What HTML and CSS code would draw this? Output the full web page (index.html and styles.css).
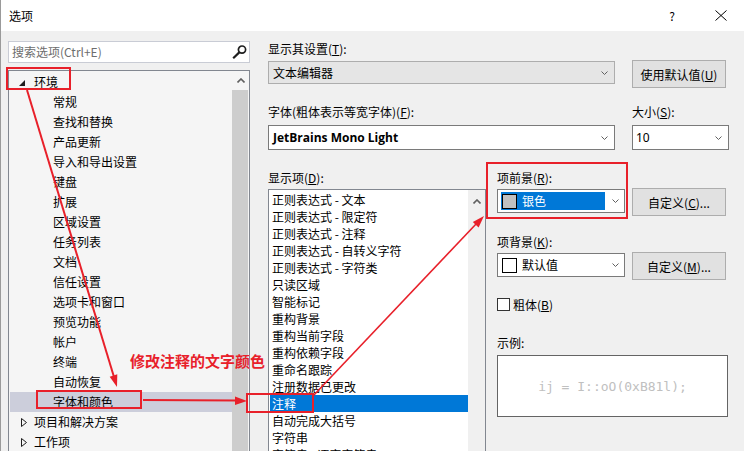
FILE: index.html
```html
<!DOCTYPE html>
<html lang="zh-CN">
<head>
<meta charset="utf-8">
<title>选项</title>
<link rel="stylesheet" href="styles.css">
</head>
<body>
<div class="window">
  <div class="titlebar">
    <span class="title">选项</span>
    <span class="help">?</span>
    <svg class="close" width="12" height="11" viewBox="0 0 12 11"><path d="M0.5 0.5 L11.5 10.5 M11.5 0.5 L0.5 10.5" stroke="#000" stroke-width="1" fill="none"/></svg>
  </div>
  <div class="main">
    <div class="left">
      <div class="search">
        <span class="placeholder">搜索选项(Ctrl+E)</span>
        <svg class="mag" width="15" height="14" viewBox="0 0 15 14"><circle cx="10" cy="4.6" r="3.6" stroke="#1e1e1e" stroke-width="1.7" fill="none"/><path d="M7.3 7.4 L1.2 13.2" stroke="#1e1e1e" stroke-width="2.2"/></svg>
      </div>
      <div class="tree">
        <div class="tree-items">
          <div class="node"><svg class="tri" width="6" height="6" viewBox="0 0 6 6"><polygon points="6,0 6,6 0,6" fill="#1e1e1e"/></svg>环境</div>
          <div class="leaf">常规</div>
          <div class="leaf">查找和替换</div>
          <div class="leaf">产品更新</div>
          <div class="leaf">导入和导出设置</div>
          <div class="leaf">键盘</div>
          <div class="leaf">扩展</div>
          <div class="leaf">区域设置</div>
          <div class="leaf">任务列表</div>
          <div class="leaf">文档</div>
          <div class="leaf">信任设置</div>
          <div class="leaf">选项卡和窗口</div>
          <div class="leaf">预览功能</div>
          <div class="leaf">帐户</div>
          <div class="leaf">终端</div>
          <div class="leaf">自动恢复</div>
          <div class="leaf selected">字体和颜色</div>
          <div class="node"><svg class="tri-c" width="6" height="9" viewBox="0 0 6 9"><polygon points="0.5,0.5 5.5,4.5 0.5,8.5" fill="none" stroke="#1e1e1e" stroke-width="1"/></svg>项目和解决方案</div>
          <div class="node"><svg class="tri-c" width="6" height="9" viewBox="0 0 6 9"><polygon points="0.5,0.5 5.5,4.5 0.5,8.5" fill="none" stroke="#1e1e1e" stroke-width="1"/></svg>工作项</div>
        </div>
        <div class="vscroll">
          <div class="sarrow"><svg width="8" height="5" viewBox="0 0 8 5"><path d="M0.5 4.5 L4 1 L7.5 4.5" stroke="#606060" stroke-width="1.6" fill="none"/></svg></div>
          <div class="thumb"></div>
        </div>
      </div>
    </div>

    <div class="right">
      <div class="lbl">显示其设置(<u>T</u>):</div>
      <div class="row row-top">
        <div class="combo combo-gray">文本编辑器<svg class="chev" width="7" height="4" viewBox="0 0 7 4"><path d="M0.5 0.5 L3.5 3.5 L6.5 0.5" stroke="#606060" stroke-width="1" fill="none"/></svg></div>
        <div class="btn">使用默认值(<u>U</u>)</div>
      </div>

      <div class="row row-font">
        <div class="col-font">
          <div class="lbl">字体(粗体表示等宽字体)(<u>F</u>):</div>
          <div class="combo combo-white combo-font"><b class="fontname">JetBrains Mono Light</b><svg class="chev" width="7" height="4" viewBox="0 0 7 4"><path d="M0.5 0.5 L3.5 3.5 L6.5 0.5" stroke="#606060" stroke-width="1" fill="none"/></svg></div>
        </div>
        <div class="col-size">
          <div class="lbl">大小(<u>S</u>):</div>
          <div class="combo combo-white combo-size">10<svg class="chev" width="7" height="4" viewBox="0 0 7 4"><path d="M0.5 0.5 L3.5 3.5 L6.5 0.5" stroke="#606060" stroke-width="1" fill="none"/></svg></div>
        </div>
      </div>

      <div class="row row-bottom">
        <div class="col-list">
          <div class="lbl">显示项(<u>D</u>):</div>
          <div class="listbox">
            <div class="list-items">
              <div class="li">正则表达式 - 文本</div>
              <div class="li">正则表达式 - 限定符</div>
              <div class="li">正则表达式 - 注释</div>
              <div class="li">正则表达式 - 自转义字符</div>
              <div class="li">正则表达式 - 字符类</div>
              <div class="li">只读区域</div>
              <div class="li">智能标记</div>
              <div class="li">重构背景</div>
              <div class="li">重构当前字段</div>
              <div class="li">重构依赖字段</div>
              <div class="li">重命名跟踪</div>
              <div class="li">注册数据已更改</div>
              <div class="li selected">注释</div>
              <div class="li">自动完成大括号</div>
              <div class="li">字符串</div>
              <div class="li">字符串 - 逐字字符串</div>
            </div>
            <div class="lscroll">
              <div class="sarrow"><svg width="8" height="5" viewBox="0 0 8 5"><path d="M0.5 4.5 L4 1 L7.5 4.5" stroke="#606060" stroke-width="1.6" fill="none"/></svg></div>
            </div>
          </div>
        </div>

        <div class="col-props">
          <div class="lbl">项前景(<u>R</u>):</div>
          <div class="row row-color">
            <div class="combo combo-white combo-color">
              <span class="hl"><span class="swatch swatch-silver"></span>银色</span>
              <svg class="chev" width="7" height="4" viewBox="0 0 7 4"><path d="M0.5 0.5 L3.5 3.5 L6.5 0.5" stroke="#606060" stroke-width="1" fill="none"/></svg>
            </div>
            <div class="btn btn-custom">自定义(<u>C</u>)...</div>
          </div>
          <div class="lbl lbl-bg">项背景(<u>K</u>):</div>
          <div class="row row-color">
            <div class="combo combo-white combo-color">
              <span class="plain"><span class="swatch swatch-white"></span>默认值</span>
              <svg class="chev" width="7" height="4" viewBox="0 0 7 4"><path d="M0.5 0.5 L3.5 3.5 L6.5 0.5" stroke="#606060" stroke-width="1" fill="none"/></svg>
            </div>
            <div class="btn btn-custom">自定义(<u>M</u>)...</div>
          </div>
          <div class="check-row"><span class="checkbox"></span>粗体(<u>B</u>)</div>
          <div class="lbl lbl-sample">示例:</div>
          <div class="sample">ij = I::oO(0xB81l);</div>
        </div>
      </div>
    </div>
  </div>

  <svg class="overlay" width="744" height="451" viewBox="0 0 744 451">
    <g fill="none" stroke="#e8202a" stroke-width="2">
      <rect x="7" y="68" width="63" height="21"/>
      <rect x="37" y="391" width="104" height="17"/>
      <rect x="247" y="394" width="66" height="18"/>
      <rect x="487" y="163" width="140" height="55"/>
    </g>
    <g stroke="#e8202a">
      <line x1="27" y1="90" x2="114" y2="377" stroke-width="2"/>
      <line x1="143" y1="400" x2="237" y2="400.6" stroke-width="2"/>
      <line x1="313" y1="396" x2="477" y2="223" stroke-width="1.6"/>
    </g>
    <g fill="#e8202a">
      <polygon points="117,387 109.7,376.7 117.3,374.3"/>
      <polygon points="247,401 235,396.5 235,405"/>
      <polygon points="484,216 478.6,227.5 472.8,221.9"/>
    </g>
  </svg>
  <div class="note">修改注释的文字颜色</div>
</div>
</body>
</html>
```

FILE: styles.css
```css
* { box-sizing: border-box; }

html, body {
  margin: 0;
  padding: 0;
}

body {
  width: 744px;
  height: 451px;
  overflow: hidden;
  font-family: "Noto Sans CJK SC", "Microsoft YaHei", sans-serif;
  font-size: 12px;
  color: #000;
  background: #f0f0f0;
}

u { text-decoration: underline; text-underline-offset: 1px; }

.window {
  position: relative;
  width: 744px;
  height: 451px;
  overflow: hidden;
  background: #f0f0f0;
  border-left: 1px solid #9a9a9a;
}

/* title bar */
.titlebar {
  height: 31px;
  background: #fff;
  display: flex;
  align-items: center;
  padding-left: 8px;
}
.title { flex: 1; font-size: 12px; line-height: 16px; }
.help { font-size: 12px; line-height: 16px; margin-right: 40px; }
.close { margin-right: 17px; }

/* main layout */
.main {
  display: flex;
  padding: 10px 0 0 7px;
}

.left {
  width: 242px;
  flex: none;
}

.search {
  height: 22px;
  background: #fff;
  border: 1px solid #c9ccd5;
  display: flex;
  align-items: center;
  padding-left: 3px;
}
.placeholder { flex: 1; color: #6d6d6d; line-height: 16px; }
.mag { margin-right: 2px; }

.tree {
  margin-top: 7px;
  height: 400px;
  border: 1px solid #828790;
  background: #f5f5f5;
  display: flex;
  padding: 1px 0 0 1px;
}
.tree-items { flex: 1; }
.node, .leaf {
  height: 20px;
  line-height: 20px;
  white-space: nowrap;
  display: flex;
  align-items: center;
}
.node { padding-left: 24px; position: relative; }
.leaf { padding-left: 43px; }
.leaf.selected { background: #cccedb; }
.tri { position: absolute; left: 9px; top: 8px; }
.tri-c { position: absolute; left: 11px; top: 6px; }

.vscroll {
  width: 17px;
  flex: none;
  margin-top: -1px;
  display: flex;
  flex-direction: column;
}
.sarrow {
  height: 19px;
  display: flex;
  align-items: center;
  justify-content: center;
}
.vscroll .thumb {
  flex: 1;
  background: #cdcdcd;
  margin-right: 1px;
}

/* right side */
.right {
  width: 461px;
  margin-left: 18px;
  display: flex;
  flex-direction: column;
}
.lbl {
  height: 15px;
  line-height: 15px;
  white-space: nowrap;
}
.row { display: flex; align-items: flex-start; }
.row-top { margin-top: 4px; }

.combo {
  display: flex;
  align-items: center;
  padding-left: 4px;
  white-space: nowrap;
}
.combo .chev { margin-left: auto; margin-right: 6px; }
.combo-gray {
  width: 347px;
  height: 23px;
  margin-top: 1px;
  background: #e5e5e5;
  border: 1px solid #adadad;
}
.combo-white {
  background: #fff;
  border: 1px solid #7a7a7a;
}
.btn {
  width: 94px;
  height: 28px;
  margin-left: 17px;
  background: #e1e1e1;
  border: 1px solid #adadad;
  display: flex;
  align-items: center;
  justify-content: center;
  white-space: nowrap;
}

.row-font { margin-top: 16px; }
.col-font { width: 347px; }
.col-size { width: 97px; margin-left: 17px; }
.combo-font, .combo-size { height: 25px; margin-top: 6px; }
.fontname {
  font-family: "Open Sans", "Noto Sans", sans-serif;
  font-weight: 700;
  font-size: 12px;
}
.combo-size { padding-left: 3px; font-family: "Noto Sans", sans-serif; }

.row-bottom { margin-top: 20px; }
.col-list { width: 218px; }
.listbox {
  margin-top: 4px;
  height: 300px;
  background: #fff;
  border: 1px solid #828790;
  display: flex;
  padding: 1px 0 0 1px;
}
.list-items { flex: 1; }
.li {
  height: 17px;
  line-height: 17px;
  padding-left: 2px;
  white-space: nowrap;
}
.li.selected { background: #0078d7; color: #fff; }
.lscroll {
  width: 17px;
  flex: none;
  background: #f0f0f0;
  margin-top: -1px;
}
.lscroll .sarrow { height: 22px; }

.col-props {
  width: 232px;
  margin-left: 11px;
}
.row-color { margin-top: 3px; }
.combo-color {
  width: 128px;
  height: 24px;
  margin-top: 1px;
  padding-left: 3px;
}
.combo-color .chev { margin-right: 5px; }
.btn-custom { margin-left: 7px; }
.hl, .plain {
  display: flex;
  align-items: center;
  width: 104px;
  height: 18px;
  line-height: 18px;
}
.hl { background: #0078d7; color: #fff; }
.swatch {
  width: 15px;
  height: 15px;
  border: 1px solid #000;
  margin: 0 5px 0 1px;
}
.swatch-silver { background: #c0c0c0; }
.swatch-white { background: #fff; }

.lbl-bg { margin-top: 18px; }
.check-row {
  margin-top: 17px;
  height: 15px;
  line-height: 15px;
  display: flex;
  align-items: center;
}
.checkbox {
  width: 13px;
  height: 13px;
  background: #fff;
  border: 1px solid #333;
  margin-right: 3px;
}
.lbl-sample { margin-top: 23px; }
.sample {
  margin-top: 5px;
  width: 231px;
  height: 62px;
  background: #fff;
  border: 1px solid #646464;
  display: flex;
  align-items: center;
  justify-content: center;
  font-family: "DejaVu Sans Mono", monospace;
  font-size: 13px;
  color: #c0c0c0;
  white-space: pre;
}

/* annotations */
.overlay {
  position: absolute;
  left: -1px;
  top: 0;
  pointer-events: none;
}
.note {
  position: absolute;
  left: 129px;
  top: 352px;
  font-size: 15px;
  line-height: 18px;
  font-weight: 700;
  color: #e8202a;
  white-space: nowrap;
}
```
